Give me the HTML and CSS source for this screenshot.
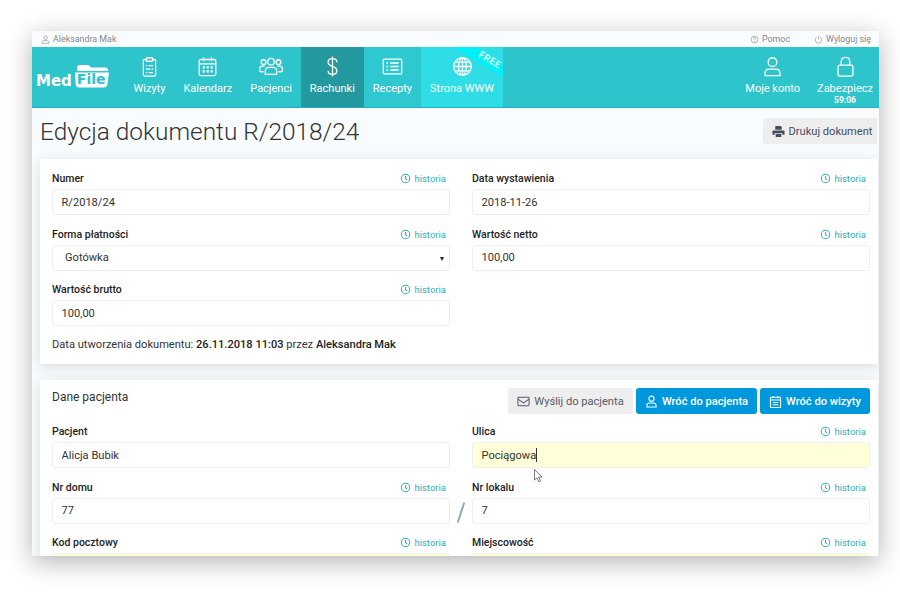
FILE: index.html
```html
<!DOCTYPE html>
<html lang="pl">
<head>
    <meta charset="UTF-8">
    <title>Edycja dokumentu R/2018/24</title>
    <link rel="stylesheet" href="styles.css">
</head>
<body>
<div class="window">
    <!-- Top bar -->
    <div class="topbar">
        <span class="top-link top-user">
            <svg class="top-icon" viewBox="0 0 12 12"><circle cx="6" cy="3.6" r="2.3"/><path d="M1.5 11V9.8c0-1.5 1.2-2.5 2.7-2.5h3.600c1.500 0 2.700 1 2.700 2.500V11z"/></svg>
            Aleksandra Mak
        </span>
        <span class="top-link">
            <svg class="top-icon" viewBox="0 0 12 12"><circle cx="6" cy="6" r="4.5"/><path d="M4.6 4.8c0-1.800 2.800-1.800 2.800 0 0 1.100-1.400 1-1.400 2.200M6 8.200v.8"/></svg>
            Pomoc
        </span>
        <span class="top-link">
            <svg class="top-icon" viewBox="0 0 12 12"><path d="M6 1.5V6M3.500 3a4.300 4.300 0 1 0 5 0"/></svg>
            Wyloguj się
        </span>
    </div>

    <!-- Main navigation -->
    <div class="nav">
        <div class="logo">
            <span class="logo-med">Med</span>
            <span class="logo-file">
                <svg class="logo-folder" viewBox="0 0 36 24"><path d="M3 7V3.500C3 2 4 1 5.500 1h8C15 1 16 2 17 3.500h14.500C33 3.500 34 4.500 34 6v1z"/><path d="M1 8.500h34L33.500 20c-.2 2-1.500 3.500-3.500 3.500H5c-2 0-3.200-1.500-3.300-3.500z"/></svg>
                <span class="logo-file-text">File</span>
            </span>
        </div>
        <a class="nav-item">
            <svg class="nav-icon" viewBox="0 0 24 24"><path d="M8 4H6.500C5.500 4 5 4.500 5 5.500v16C5 22.500 5.500 23 6.500 23h11c1 0 1.500-.5 1.500-1.500v-16C19 4.500 18.500 4 17.500 4H16"/><rect x="8.500" y="2" width="7" height="4" rx="1"/><path d="M8 11h1.500M11 11h5M8 15h5M14.500 15H16M8 19h1.500M11 19h5"/></svg>
            Wizyty
        </a>
        <a class="nav-item">
            <svg class="nav-icon" viewBox="0 0 24 24"><rect x="2.500" y="4" width="19" height="18.500" rx="2"/><path d="M2.500 9h19M7.500 1.500V6M16.500 1.500V6"/><path class="thick" d="M6.500 13H9M11 13h2.500M15.500 13H18M6.500 17.500H9M11 17.500h2.500M15.500 17.500H18"/></svg>
            Kalendarz
        </a>
        <a class="nav-item">
            <svg class="nav-icon nav-icon-wide" viewBox="0 0 28 24"><circle cx="14" cy="6.500" r="3.700"/><circle cx="5.500" cy="7" r="2.700"/><circle cx="22.500" cy="7" r="2.700"/><path d="M7.500 21v-3.500c0-2.500 1.800-4.500 4.300-4.500h4.400c2.500 0 4.300 2 4.300 4.500V21z"/><path d="M5.500 18H2.800C1.800 18 1 17.300 1 16.200v-1.500C1 12.800 2.300 11.500 4.200 11.500h2.600M22.500 18h2.700c1 0 1.800-.7 1.800-1.800v-1.500c0-1.900-1.300-3.200-3.200-3.200h-2.600"/></svg>
            Pacjenci
        </a>
        <a class="nav-item nav-active">
            <svg class="nav-icon" viewBox="0 0 24 24"><path d="M17 7c0-2.500-2-4-5-4S7 4.500 7 7s2 3.800 5 4.800 5 2.400 5 5-2 4.200-5 4.200-5-1.700-5-4.200M12 .5v23"/></svg>
            Rachunki
        </a>
        <a class="nav-item nav-recepty">
            <svg class="nav-icon" viewBox="0 0 24 24"><rect x="1.500" y="3.500" width="21" height="17" rx="1"/><path d="M5 8h2M9.500 8H19M5 12h2M9.500 12H19M5 16h2M9.500 16H19"/></svg>
            Recepty
        </a>
        <a class="nav-item nav-www">
            <svg class="nav-icon" viewBox="0 0 24 24"><circle cx="12" cy="12" r="10"/><ellipse cx="12" cy="12" rx="4.500" ry="10"/><path d="M12 2v20M2 12h20M3.500 7h17M3.500 17h17"/></svg>
            Strona WWW
            <span class="ribbon"></span>
            <span class="ribbon-text">FREE</span>
        </a>
        <a class="nav-item nav-konto">
            <svg class="nav-icon" viewBox="0 0 24 24"><circle cx="12" cy="7" r="5"/><path d="M3.500 22.500V20c0-3 2.200-5 5-5h7c2.800 0 5 2 5 5v2.500z"/></svg>
            Moje konto
        </a>
        <a class="nav-item nav-lock">
            <svg class="nav-icon" viewBox="0 0 24 24"><rect x="3.500" y="10.500" width="17" height="12.500" rx="2"/><path d="M7 10.500V7c0-3.200 2-5.500 5-5.500s5 2.300 5 5.500v3.500"/></svg>
            Zabezpiecz
            <span class="timer">59:06</span>
        </a>
    </div>

    <!-- Content -->
    <div class="content">
        <div class="page-head">
            <h1>Edycja dokumentu R/2018/24</h1>
            <button class="btn btn-print">
                <svg class="btn-icon" viewBox="0 0 14 14"><path class="solid" d="M3.500 1h5.800l1.200 1.200V5h-7zM1.500 5.800h11c.6 0 1 .4 1 1v3.700H11v-2H3v2H.5V6.800c0-.6.4-1 1-1zM4 9.500h6V13H4z"/></svg>
                Drukuj dokument
            </button>
        </div>

        <div class="card">
            <div class="form-grid">
                <div class="field">
                    <div class="field-head"><label>Numer</label><a class="history"><svg class="clock" viewBox="0 0 12 12"><circle cx="6" cy="6" r="4.6"/><path d="M6 3.200v3.100l1.800 1"/></svg>historia</a></div>
                    <input class="input" type="text" value="R/2018/24">
                </div>
                <div class="field">
                    <div class="field-head"><label>Data wystawienia</label><a class="history"><svg class="clock" viewBox="0 0 12 12"><circle cx="6" cy="6" r="4.6"/><path d="M6 3.200v3.100l1.800 1"/></svg>historia</a></div>
                    <input class="input" type="text" value="2018-11-26">
                </div>
                <div class="field">
                    <div class="field-head"><label>Forma płatności</label><a class="history"><svg class="clock" viewBox="0 0 12 12"><circle cx="6" cy="6" r="4.6"/><path d="M6 3.200v3.100l1.800 1"/></svg>historia</a></div>
                    <div class="input select">Gotówka<span class="select-arrow"></span></div>
                </div>
                <div class="field">
                    <div class="field-head"><label>Wartość netto</label><a class="history"><svg class="clock" viewBox="0 0 12 12"><circle cx="6" cy="6" r="4.6"/><path d="M6 3.200v3.100l1.800 1"/></svg>historia</a></div>
                    <input class="input" type="text" value="100,00">
                </div>
                <div class="field">
                    <div class="field-head"><label>Wartość brutto</label><a class="history"><svg class="clock" viewBox="0 0 12 12"><circle cx="6" cy="6" r="4.6"/><path d="M6 3.200v3.100l1.800 1"/></svg>historia</a></div>
                    <input class="input" type="text" value="100,00">
                </div>
            </div>
            <p class="created">Data utworzenia dokumentu: <b>26.11.2018 11:03</b> przez <b>Aleksandra Mak</b></p>
        </div>

        <div class="card card-patient">
            <div class="card-head">
                <span class="card-title">Dane pacjenta</span>
                <div class="card-actions">
                    <button class="btn btn-grey">
                        <svg class="btn-icon line" viewBox="0 0 14 14"><rect x="1" y="2.500" width="12" height="9" rx="1"/><path d="M1 4.500l6 4 6-4"/></svg>
                        Wyślij do pacjenta
                    </button>
                    <button class="btn btn-blue">
                        <svg class="btn-icon line" viewBox="0 0 14 14"><circle cx="7" cy="4" r="2.800"/><path d="M2 13v-1.500c0-1.800 1.200-3 3-3h4c1.800 0 3 1.200 3 3V13z"/></svg>
                        Wróć do pacjenta
                    </button>
                    <button class="btn btn-blue">
                        <svg class="btn-icon line" viewBox="0 0 14 14"><rect x="1.500" y="2.500" width="11" height="11" rx="1"/><path d="M1.500 5.500h11M4.500 1v2.500M9.500 1v2.500M4 8h6M4 10.500h6"/></svg>
                        Wróć do wizyty
                    </button>
                </div>
            </div>
            <div class="form-grid">
                <div class="field">
                    <div class="field-head"><label>Pacjent</label></div>
                    <input class="input" type="text" value="Alicja Bubik">
                </div>
                <div class="field">
                    <div class="field-head"><label>Ulica</label><a class="history"><svg class="clock" viewBox="0 0 12 12"><circle cx="6" cy="6" r="4.6"/><path d="M6 3.200v3.100l1.800 1"/></svg>historia</a></div>
                    <div class="input input-changed">Pociągowa<span class="caret"></span></div>
                </div>
                <div class="field">
                    <div class="field-head"><label>Nr domu</label><a class="history"><svg class="clock" viewBox="0 0 12 12"><circle cx="6" cy="6" r="4.6"/><path d="M6 3.200v3.100l1.800 1"/></svg>historia</a></div>
                    <input class="input" type="text" value="77">
                    <span class="slash"></span>
                </div>
                <div class="field">
                    <div class="field-head"><label>Nr lokalu</label><a class="history"><svg class="clock" viewBox="0 0 12 12"><circle cx="6" cy="6" r="4.6"/><path d="M6 3.200v3.100l1.800 1"/></svg>historia</a></div>
                    <input class="input" type="text" value="7">
                </div>
                <div class="field">
                    <div class="field-head"><label>Kod pocztowy</label><a class="history"><svg class="clock" viewBox="0 0 12 12"><circle cx="6" cy="6" r="4.6"/><path d="M6 3.200v3.100l1.800 1"/></svg>historia</a></div>
                    <div class="input input-changed"></div>
                </div>
                <div class="field">
                    <div class="field-head"><label>Miejscowość</label><a class="history"><svg class="clock" viewBox="0 0 12 12"><circle cx="6" cy="6" r="4.6"/><path d="M6 3.200v3.100l1.800 1"/></svg>historia</a></div>
                    <div class="input input-changed"></div>
                </div>
            </div>
        </div>

        <!-- Mouse pointer caught in the screenshot -->
        <svg class="cursor" viewBox="0 0 10 14"><path d="M.5.5V11L3 8.800l1.800 4 1.700-.8-1.800-3.900H8z"/></svg>
    </div>
</div>
</body>
</html>
```

FILE: styles.css
```css
* {
    margin: 0;
    padding: 0;
    box-sizing: border-box;
}

body {
    font-family: Roboto, "Liberation Sans", sans-serif;
    background-color: #fff;
    height: 600px;
    overflow: hidden;
    color: #222;
}

.window {
    width: 847px;
    height: 525px;
    margin: 31px 0 0 32px;
    background-color: #f9fcfe;
    box-shadow: 0 6px 26px rgba(0, 0, 0, 0.3);
    border-radius: 2px;
    overflow: hidden;
    position: relative;
}

/* Top bar */
.topbar {
    height: 16px;
    display: flex;
    align-items: center;
    gap: 24px;
    padding: 0 8px 0 9px;
    font-size: 8.9px;
    color: #888;
}

.top-link {
    display: flex;
    align-items: center;
    gap: 3px;
}

.top-user {
    margin-right: auto;
}

.top-icon {
    width: 9px;
    height: 9px;
    fill: none;
    stroke: #999;
    stroke-width: 1;
}

/* Navigation */
.nav {
    height: 61px;
    display: flex;
    background-color: #2dc4cc;
    border-bottom: 1px solid #26b4bc;
}

.logo {
    width: 92.5px;
    flex-shrink: 0;
    display: flex;
    align-items: center;
    padding: 0 0 2px 4px;
    color: #fff;
}

.logo-med {
    font-family: "DejaVu Sans", sans-serif;
    font-size: 15px;
    font-weight: bold;
    margin-top: 10px;
}

.logo-file {
    width: 36px;
    height: 24px;
    margin-left: 2px;
    position: relative;
}

.logo-folder {
    width: 36px;
    height: 24px;
    fill: #fff;
}

.logo-file-text {
    position: absolute;
    left: 3px;
    top: 7px;
    font-family: "DejaVu Sans", sans-serif;
    font-size: 14px;
    font-weight: bold;
    line-height: 16px;
    color: #2dc4cc;
}

.nav-item {
    position: relative;
    display: flex;
    flex-direction: column;
    align-items: center;
    padding: 9px 9px 0;
    font-size: 11px;
    color: #fff;
    white-space: nowrap;
    overflow: hidden;
}

.nav-icon {
    width: 21px;
    height: 21px;
    margin-bottom: 5px;
    fill: none;
    stroke: #fff;
    stroke-width: 1.5;
}

.nav-icon-wide {
    width: 26px;
}

.nav-icon .thick {
    stroke-width: 2.5;
}

.nav-active {
    background-color: #23999f;
}

.nav-recepty {
    background-color: #2ec8d0;
}

.nav-www {
    background-color: #2edde6;
}

.nav-konto {
    margin-left: auto;
    padding: 9px 8.5px 0;
}

.nav-lock {
    padding: 9px 6px 0 8.5px;
}

.ribbon {
    position: absolute;
    top: 0;
    right: 0;
    width: 50px;
    height: 30px;
    background-color: #00f0f6;
    clip-path: polygon(0 0, 24px 0, 100% 15px, 100% 100%);
}

.ribbon-text {
    position: absolute;
    top: 7px;
    right: 1px;
    font-size: 9.5px;
    font-weight: 500;
    letter-spacing: 0.5px;
    transform: rotate(31deg);
}

.timer {
    font-size: 8.5px;
    font-weight: bold;
    line-height: 11px;
}

/* Content */
.content {
    position: relative;
    padding: 0 1px 0 8px;
}

.page-head {
    height: 51px;
    display: flex;
    justify-content: space-between;
    align-items: center;
    padding-bottom: 5px;
}

.page-head h1 {
    font-size: 24.4px;
    font-weight: 300;
    color: #333;
}

.btn {
    display: flex;
    align-items: center;
    justify-content: center;
    gap: 4px;
    height: 26px;
    border: none;
    border-radius: 3px;
    font-family: inherit;
    font-size: 11.1px;
}

.btn-print {
    width: 114px;
    padding-left: 4px;
    background-color: #eee;
    color: #444c5c;
    border-radius: 3px 0 0 3px;
    margin-right: 1px;
}

.btn-icon {
    width: 13px;
    height: 13px;
}

.btn-icon .solid {
    fill: #444c5c;
    fill-rule: evenodd;
}

.btn-icon.line {
    fill: none;
    stroke: currentColor;
    stroke-width: 1.1;
}

.btn-grey {
    background-color: #eee;
    color: #555c68;
    width: 125px;
}

.btn-blue {
    background-color: #0098dd;
    color: #fff;
    font-weight: 500;
    width: 121px;
}

.btn-blue:last-child {
    width: 110px;
}

.card {
    background-color: #fff;
    height: 205px;
    padding: 12px 8px 0 12px;
    border-radius: 2px;
    box-shadow: 0 3px 14px rgba(0, 0, 0, 0.13);
}

.card-patient {
    margin-top: 16px;
    height: 200px;
    padding-top: 8px;
}

.card-head {
    height: 36px;
    display: flex;
    justify-content: space-between;
    align-items: flex-start;
}

.card-title {
    font-size: 12px;
    padding-top: 2px;
    color: #333;
}

.card-actions {
    display: flex;
    gap: 3px;
}

.form-grid {
    display: grid;
    grid-template-columns: 398px 398px;
    grid-auto-rows: 55.5px;
    column-gap: 22px;
}

.field {
    position: relative;
}

.field-head {
    height: 18px;
    display: flex;
    justify-content: space-between;
    padding-right: 4px;
}

.field-head label {
    font-size: 10.5px;
    font-weight: 500;
    line-height: 15px;
    color: #222;
}

.history {
    display: flex;
    align-items: center;
    gap: 3px;
    height: 15px;
    font-size: 9.5px;
    color: #2fb0b8;
}

.clock {
    width: 11px;
    height: 11px;
    fill: none;
    stroke: #2fb0b8;
    stroke-width: 1.1;
}

.input {
    display: flex;
    align-items: center;
    width: 100%;
    height: 26px;
    padding: 0 8.5px;
    font-family: inherit;
    font-size: 11.1px;
    color: #333;
    background-color: #fff;
    border: 1px solid #ecf0f4;
    border-radius: 3px;
}

.input-changed {
    background-color: #ffffd8;
}

.select {
    position: relative;
    padding-left: 12px;
}

.select-arrow {
    position: absolute;
    right: 5px;
    top: 11px;
    border-left: 2px solid transparent;
    border-right: 2px solid transparent;
    border-top: 4px solid #222;
}

.caret {
    width: 1px;
    height: 14px;
    background-color: #333;
}

.slash {
    position: absolute;
    left: 408px;
    top: 22px;
    width: 2px;
    height: 21px;
    background-color: #9aa6b4;
    transform: rotate(18deg);
}

.created {
    font-size: 11.1px;
    line-height: 14px;
    color: #333;
}

.created b {
    font-weight: 500;
    color: #222;
}

.cursor {
    position: absolute;
    left: 502px;
    top: 361px;
    width: 10px;
    height: 14px;
    fill: #fff;
    stroke: #555;
    stroke-width: 0.8;
}
```
